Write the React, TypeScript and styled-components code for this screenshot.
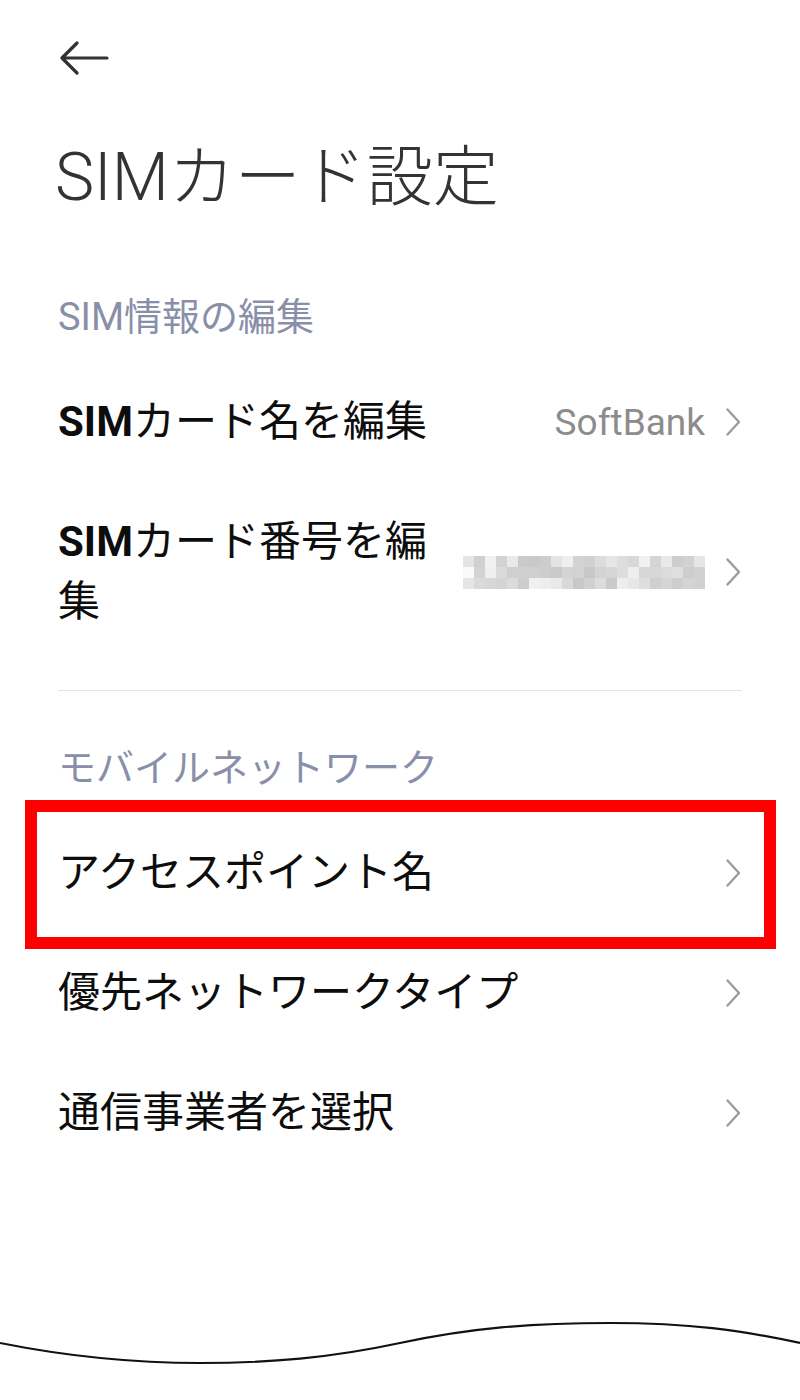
import React from 'react'
import styled, { createGlobalStyle } from 'styled-components'

const GlobalStyle = createGlobalStyle`
  body {
    margin: 0;
    background: #ffffff;
    font-family: Roboto, "Noto Sans CJK JP", sans-serif;
    color: #111111;
  }
`

type IRow = {
  prefix?: string,
  label: string,
  value?: string,
  masked?: boolean,
  highlighted?: boolean
}

const simRows: IRow[] = [
  { prefix: 'SIM', label: 'カード名を編集', value: 'SoftBank' },
  { prefix: 'SIM', label: 'カード番号を編集', masked: true }
]

const networkRows: IRow[] = [
  { label: 'アクセスポイント名', highlighted: true },
  { label: '優先ネットワークタイプ' },
  { label: '通信事業者を選択' }
]

// pixelated (blurred) phone number
const maskCols = 22
const maskRows = 3
const maskCell = 11
const maskShade = (row: number, col: number) => {
  const n = Math.abs(Math.sin(row * 12.9898 + col * 78.233) * 43758.5453) % 1
  const edge = col === 0 ? 28 : 0
  const v = Math.round(200 + n * 42 + edge)
  const c = Math.min(v, 250)
  return `rgb(${c},${c},${c})`
}

const BackArrow = () => (
  <svg width="50" height="34" viewBox="0 0 50 34">
    <path d="M3 17 H48 M18 2 L3 17 L18 32" fill="none" stroke="#333" strokeWidth="3.2" strokeLinecap="round" strokeLinejoin="round" />
  </svg>
)

const Chevron = () => (
  <ChevronIcon width="16" height="30" viewBox="0 0 16 30">
    <path d="M2.5 2.5 L14 15 L2.5 27.5" fill="none" stroke="#9c9c9c" strokeWidth="2.4" strokeLinecap="round" strokeLinejoin="round" />
  </ChevronIcon>
)

const MaskedNumber = () => (
  <svg width={maskCols * maskCell} height={maskRows * maskCell}>
    {Array.from({ length: maskRows }).map((_, r) =>
      Array.from({ length: maskCols }).map((__, c) => (
        <rect key={`${r}-${c}`} x={c * maskCell} y={r * maskCell} width={maskCell} height={maskCell} fill={maskShade(r, c)} />
      ))
    )}
  </svg>
)

const Wave = () => (
  <WaveSvg width="800" height="120" viewBox="0 0 800 120">
    <path d="M0 63 C60 75 130 83 200 83 S330 78 400 63 S530 43 610 43 S740 50 800 63" fill="none" stroke="#111" strokeWidth="2.2" />
  </WaveSvg>
)

const renderRow = (row: IRow) => (
  <Row key={row.label}>
    <Label>
      {row.prefix && <LabelPrefix>{row.prefix}</LabelPrefix>}
      {row.label}
    </Label>
    <RowEnd>
      {row.value && <Value>{row.value}</Value>}
      {row.masked && <MaskedNumber />}
      <Chevron />
    </RowEnd>
    {row.highlighted && <Highlight />}
  </Row>
)

const App = () => {
  return (
    <>
      <GlobalStyle />
      <Page>
        <Content>
          <TopBar>
            <BackArrow />
          </TopBar>
          <Title>SIMカード設定</Title>
          <SectionHeader>SIM情報の編集</SectionHeader>
          {simRows.map(renderRow)}
          <Divider />
          <SectionHeader>モバイルネットワーク</SectionHeader>
          {networkRows.map(renderRow)}
        </Content>
        <Wave />
      </Page>
    </>
  )
}

const Page = styled.div`
  width: 800px;
  min-height: 1400px;
  display: flex;
  flex-direction: column;
  background: #ffffff;
`

const Content = styled.div`
  padding: 0 58px;
  display: flex;
  flex-direction: column;
`

const TopBar = styled.div`
  height: 116px;
  display: flex;
  align-items: center;
  margin-left: 1px;
`

const Title = styled.h1`
  margin: 0;
  font-size: 66px;
  font-weight: 300;
  line-height: 124px;
  color: #333333;
  margin-left: -3px;
`

const SectionHeader = styled.div`
  padding: 52px 0 20px;
  font-size: 38px;
  line-height: 50px;
  color: #8a8fa9;
`

const Row = styled.div`
  position: relative;
  display: flex;
  align-items: center;
  padding: 30px 0;
`

const Label = styled.div`
  flex: 1 1 auto;
  min-width: 0;
  font-size: 42px;
  line-height: 60px;
  font-weight: 400;
  color: #0d0d0d;
`

const LabelPrefix = styled.span`
  font-weight: 700;
`

const RowEnd = styled.div`
  flex-shrink: 0;
  display: flex;
  align-items: center;
  gap: 20px;
  margin-left: 24px;
`

const Value = styled.span`
  font-size: 37px;
  color: #8c8c8c;
`

const ChevronIcon = styled.svg`
  display: block;
  margin-right: 1px;
`

const Divider = styled.div`
  height: 1px;
  margin-top: 28px;
  background: #e4e4e4;
`

const Highlight = styled.div`
  position: absolute;
  top: -13px;
  bottom: -16px;
  left: -33px;
  right: -34px;
  border: 12px solid #ff0000;
  pointer-events: none;
`

const WaveSvg = styled.svg`
  display: block;
  margin-top: auto;
`

export default App
